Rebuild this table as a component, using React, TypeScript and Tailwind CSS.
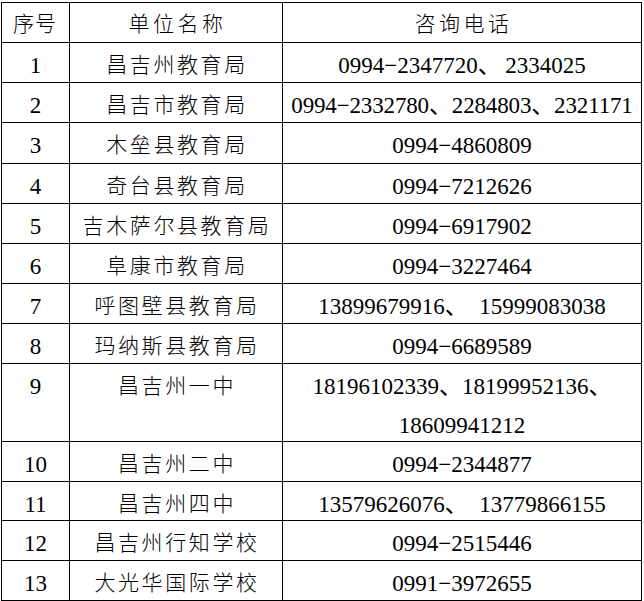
import React from "react";

type Row = { no: string; name: string; phone: React.ReactNode; h: string; t?: string };

const rows: Row[] = [
  { no: "1", name: "昌吉州教育局", phone: <>0994−2347720、{"\u2009"}2334025</>, h: "h-[40px]" },
  { no: "2", name: "昌吉市教育局", phone: "0994−2332780、2284803、2321171", h: "h-[40px]", t: "tracking-[-0.15px]" },
  { no: "3", name: "木垒县教育局", phone: "0994−4860809", h: "h-[41px]" },
  { no: "4", name: "奇台县教育局", phone: "0994−7212626", h: "h-[40px]" },
  { no: "5", name: "吉木萨尔县教育局", phone: "0994−6917902", h: "h-[40px]" },
  { no: "6", name: "阜康市教育局", phone: "0994−3227464", h: "h-[40px]" },
  { no: "7", name: "呼图壁县教育局", phone: <>13899679916、{"\u2002"}15999083038</>, h: "h-[40px]" },
  { no: "8", name: "玛纳斯县教育局", phone: "0994−6689589", h: "h-[40px]" },
  {
    no: "9",
    name: "昌吉州一中",
    phone: (
      <>
        18196102339、18199952136、
        <br />
        18609941212
      </>
    ),
    h: "h-[78px]",
  },
  { no: "10", name: "昌吉州二中", phone: "0994−2344877", h: "h-[40px]" },
  { no: "11", name: "昌吉州四中", phone: <>13579626076、{"\u2002"}13779866155</>, h: "h-[39px]" },
  { no: "12", name: "昌吉州行知学校", phone: "0994−2515446", h: "h-[40px]" },
  { no: "13", name: "大光华国际学校", phone: "0991−3972655", h: "h-[40px]" },
];

const serif = "font-['Liberation_Serif','Noto_Sans_CJK_SC',serif]";
const cjk = "font-['Noto_Sans_CJK_SC','Noto_Sans',sans-serif]";

export default function App() {
  return (
    <div className="w-[644px] h-[601px] bg-white text-black overflow-hidden">
      <div className="ml-[1px] mt-[2px] w-[641px] border-l border-t border-black">
        {/* header */}
        <div className="grid grid-cols-[68px_213px_359px] h-[40px] border-b border-black">
          <div className={`border-r border-black text-center ${cjk} font-light text-[21px] leading-[39px] tracking-[1px] pl-[1px] pr-[2px]`}>
            序号
          </div>
          <div className={`border-r border-black text-center ${cjk} font-light text-[21px] leading-[39px] tracking-[3.5px] pl-[3px]`}>
            单位名称
          </div>
          <div className={`border-r border-black text-center ${cjk} font-light text-[21px] leading-[39px] tracking-[3.5px] pl-[3px]`}>
            咨询电话
          </div>
        </div>
        {rows.map((r) => (
          <div
            key={r.no}
            className={`grid grid-cols-[68px_213px_359px] ${r.h} border-b border-black`}
          >
            <div className={`border-r border-black text-center ${serif} text-[23px] leading-[39px] pt-[3px]`}>
              {r.no}
            </div>
            <div className={`border-r border-black text-center ${cjk} font-light text-[21px] leading-[39px] pt-[1px] tracking-[2.6px] pl-[2px] whitespace-nowrap`}>
              {r.name}
            </div>
            <div className={`border-r border-black text-center ${serif} text-[23px] leading-[39px] pt-[3px] whitespace-nowrap ${r.t ?? ""}`}>
              {r.phone}
            </div>
          </div>
        ))}
      </div>
    </div>
  );
}
